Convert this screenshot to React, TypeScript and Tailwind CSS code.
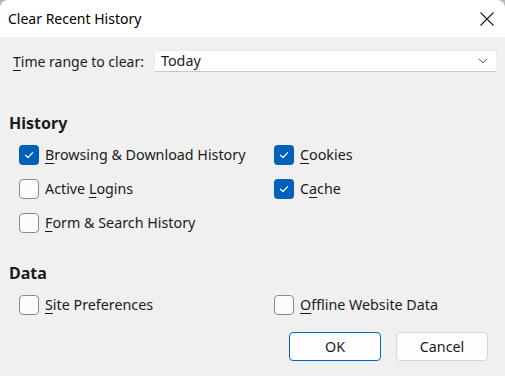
import React, { useState } from 'react';

// Small checkbox in the Windows 11 style
const Check: React.FC<{ checked: boolean; onToggle: () => void }> = ({ checked, onToggle }) => (
  <span
    onClick={onToggle}
    className={
      'flex h-[20px] w-[20px] shrink-0 items-center justify-center rounded-[4px] ' +
      (checked ? 'bg-[#005fb8]' : 'border border-[#8a8a8a] bg-[#fbfbfb]')
    }
  >
    {checked && (
      <svg width="12" height="12" viewBox="0 0 12 12" fill="none">
        <path d="M2.5 6.3 L5 8.6 L9.6 3.6" stroke="white" strokeWidth="1.3" strokeLinecap="round" strokeLinejoin="round" />
      </svg>
    )}
  </span>
);

interface Item {
  key: string;
  before: string;
  access: string;
  after: string;
}

const Option: React.FC<{ item: Item; checked: boolean; onToggle: () => void }> = ({ item, checked, onToggle }) => (
  <label className="flex h-[34px] items-center gap-[6px] cursor-default">
    <Check checked={checked} onToggle={onToggle} />
    <span className="text-[14.3px] text-[#1b1b1b]">
      {item.before}
      <u className="underline-offset-[3px]">{item.access}</u>
      {item.after}
    </span>
  </label>
);

const App: React.FC = () => {
  const [checks, setChecks] = useState<Record<string, boolean>>({
    browsing: true,
    cookies: true,
    logins: false,
    cache: true,
    forms: false,
    sitePrefs: false,
    offline: false,
  });

  const toggle = (k: string) => setChecks((c) => ({ ...c, [k]: !c[k] }));

  const row = (item: Item) => (
    <Option key={item.key} item={item} checked={checks[item.key]} onToggle={() => toggle(item.key)} />
  );

  return (
    <div
      className="h-[376px] w-[505px] overflow-hidden bg-[#b8b8b8] text-[#1b1b1b]"
      style={{ fontFamily: '"Noto Sans", "Open Sans", sans-serif' }}
    >
      <div className="flex h-full flex-col overflow-hidden rounded-t-[8px]">
        {/* title bar */}
        <div className="flex h-[37px] shrink-0 items-center justify-between bg-white pl-[8px] pr-[9px]">
          <span className="text-[14px] text-black">Clear Recent History</span>
          <svg width="16" height="16" viewBox="0 0 16 16" className="mr-[1px]">
            <path d="M1.5 1.5 L14.5 14.5 M14.5 1.5 L1.5 14.5" stroke="#1b1b1b" strokeWidth="1.1" />
          </svg>
        </div>

        <div className="flex flex-1 flex-col bg-[#f0f0f0] pt-[14px]">
          {/* time range */}
          <div className="ml-[13px] mr-[9px] flex h-[21px] items-center">
            <span className="flex-1 text-[14px]">
              <u className="underline-offset-[3px]">T</u>ime range to clear:
            </span>
            <div className="flex h-[21px] w-[341px] items-center justify-between border-b border-[#c9c9c9] bg-white pl-[6px] pr-[8px] text-[14.3px] shadow-[0_0_0_1px_#ececec]">
              <span>Today</span>
              <svg width="10" height="6" viewBox="0 0 10 6">
                <path d="M0.8 0.8 L5 4.8 L9.2 0.8" stroke="#5a5a5a" strokeWidth="1" fill="none" />
              </svg>
            </div>
          </div>

          {/* history */}
          <div className="ml-[9px] mt-[41px] flex h-[20px] items-center text-[16px] font-bold">History</div>
          <div className="mt-[5px] grid grid-cols-[255px_1fr] pl-[19px]">
            {row({ key: 'browsing', before: '', access: 'B', after: 'rowsing & Download History' })}
            {row({ key: 'cookies', before: '', access: 'C', after: 'ookies' })}
            {row({ key: 'logins', before: 'Active ', access: 'L', after: 'ogins' })}
            {row({ key: 'cache', before: 'C', access: 'a', after: 'che' })}
            {row({ key: 'forms', before: '', access: 'F', after: 'orm & Search History' })}
          </div>

          {/* data */}
          <div className="ml-[9px] mt-[23px] flex h-[20px] items-center text-[16px] font-bold">Data</div>
          <div className="mt-[5px] grid grid-cols-[255px_1fr] pl-[19px]">
            {row({ key: 'sitePrefs', before: '', access: 'S', after: 'ite Preferences' })}
            {row({ key: 'offline', before: '', access: 'O', after: 'ffline Website Data' })}
          </div>

          {/* buttons */}
          <div className="mr-[17px] mt-[10px] flex justify-end gap-[15px]">
            <button className="h-[29px] w-[92px] rounded-[4px] border border-[#0067c0] bg-[#fdfdfd] text-[14.3px]">
              OK
            </button>
            <button className="h-[29px] w-[92px] rounded-[4px] border border-[#d5d5d5] bg-[#fdfdfd] text-[14.3px]">
              Cancel
            </button>
          </div>
        </div>
      </div>
    </div>
  );
};

export default App;
